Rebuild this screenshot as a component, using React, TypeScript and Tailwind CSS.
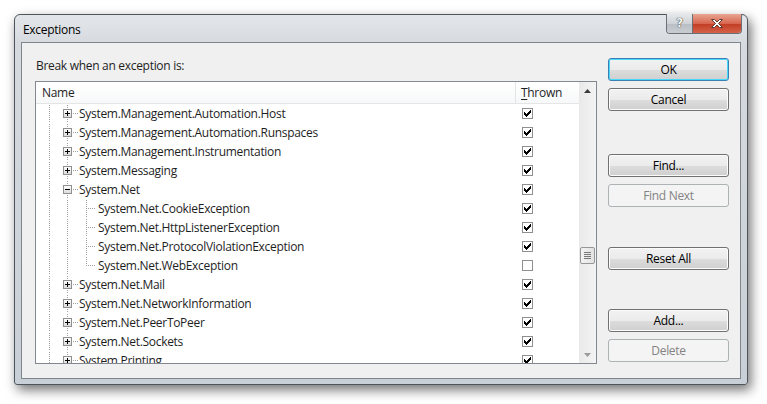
import React from "react";

type Kind = "plus" | "minus" | "child";
type Row = { name: string; kind: Kind; checked: boolean; last?: boolean };

const rows: Row[] = [
  { name: "System.Management.Automation.Host", kind: "plus", checked: true },
  { name: "System.Management.Automation.Runspaces", kind: "plus", checked: true },
  { name: "System.Management.Instrumentation", kind: "plus", checked: true },
  { name: "System.Messaging", kind: "plus", checked: true },
  { name: "System.Net", kind: "minus", checked: true },
  { name: "System.Net.CookieException", kind: "child", checked: true },
  { name: "System.Net.HttpListenerException", kind: "child", checked: true },
  { name: "System.Net.ProtocolViolationException", kind: "child", checked: true },
  { name: "System.Net.WebException", kind: "child", checked: false, last: true },
  { name: "System.Net.Mail", kind: "plus", checked: true },
  { name: "System.Net.NetworkInformation", kind: "plus", checked: true },
  { name: "System.Net.PeerToPeer", kind: "plus", checked: true },
  { name: "System.Net.Sockets", kind: "plus", checked: true },
  { name: "System.Printing", kind: "plus", checked: true },
];

const DOT = "#a0a0a0";

function VDots({ x, y1, y2 }: { x: number; y1: number; y2: number }) {
  const out: React.ReactElement[] = [];
  for (let y = y1; y < y2; y += 2) out.push(<rect key={y} x={x} y={y} width={1} height={1} fill={DOT} />);
  return <>{out}</>;
}
function HDots({ y, x1, x2 }: { y: number; x1: number; x2: number }) {
  const out: React.ReactElement[] = [];
  for (let x = x1; x < x2; x += 2) out.push(<rect key={x} x={x} y={y} width={1} height={1} fill={DOT} />);
  return <>{out}</>;
}

function Gutter({ kind, last }: { kind: Kind; last?: boolean }) {
  const w = kind === "child" ? 62 : 43;
  return (
    <svg width={w} height={19} className="shrink-0" shapeRendering="crispEdges">
      <VDots x={13} y1={1} y2={19} />
      <VDots x={31} y1={1} y2={19} />
      {kind !== "child" && (
        <>
          <defs>
            <linearGradient id="bx" x1="0" y1="0" x2="0" y2="1">
              <stop offset="0" stopColor="#ffffff" />
              <stop offset="1" stopColor="#dadada" />
            </linearGradient>
          </defs>
          <rect x={27} y={5} width={9} height={9} fill="#ffffff" />
          <rect x={27.5} y={5.5} width={8} height={8} fill="url(#bx)" stroke="#8e8f8f" />
          <rect x={29} y={9} width={5} height={1} fill="#000" />
          {kind === "plus" && <rect x={31} y={7} width={1} height={5} fill="#000" />}
          <HDots y={9} x1={37} x2={42} />
        </>
      )}
      {kind === "child" && (
        <>
          <VDots x={50} y1={1} y2={last ? 10 : 19} />
          <HDots y={9} x1={52} x2={60} />
        </>
      )}
    </svg>
  );
}

const CHECK = [
  "......X",
  ".....XX",
  "X...XXX",
  "XX.XXX.",
  "XXXXX..",
  ".XXX...",
  "..X....",
];

function Check({ on }: { on: boolean }) {
  const cells: React.ReactElement[] = [];
  if (on)
    CHECK.forEach((row, y) =>
      row.split("").forEach((c, x) => {
        if (c === "X") cells.push(<rect key={`${x}-${y}`} x={2 + x} y={2 + y} width={1} height={1} fill="#000" />);
      })
    );
  return (
    <svg width={11} height={11} shapeRendering="crispEdges" className="shrink-0">
      <rect x={0.5} y={0.5} width={10} height={10} fill="#fff" stroke="#8f8f8f" />
      {cells}
    </svg>
  );
}

function Btn({ children, def, disabled, className = "" }: { children: React.ReactNode; def?: boolean; disabled?: boolean; className?: string }) {
  if (disabled)
    return (
      <div className={`h-[23px] w-[121px] rounded-[3px] border border-[#adb2b5] bg-[#f4f4f4] flex items-center justify-center text-[#838383] ${className}`}>
        {children}
      </div>
    );
  return (
    <div
      className={`h-[23px] w-[121px] rounded-[3px] border ${def ? "border-[#3c7fb1] shadow-[inset_0_0_0_1px_#48d8fb]" : "border-[#707070] shadow-[inset_0_0_0_1px_#fcfcfc]"} bg-[linear-gradient(#f2f2f2_0%,#ebebeb_50%,#dddddd_51%,#cfcfcf_100%)] flex items-center justify-center text-black ${className}`}
    >
      {children}
    </div>
  );
}

export default function App() {
  return (
    <div className="w-[767px] h-[404px] bg-white pt-[14px] pl-[14px] font-['Open_Sans',sans-serif] text-[12px] leading-[15px] tracking-[-0.3px] text-[#1e1e1e] overflow-hidden">
      <div className="relative w-[734px] h-[371px] rounded-t-[6px] rounded-b-[3px] border border-[#4d545c] bg-[linear-gradient(#e3e6e9,#d6dadf_30px,#c9cfd6)] shadow-[3px_5px_12px_rgba(0,0,0,0.55)] flex flex-col">
        <div className="h-[27px] shrink-0 pl-[8px] pt-[7px] text-[12px] text-black">Exceptions</div>
        {/* caption buttons */}
        <div className="absolute right-[5px] top-[-1px] flex h-[20px] rounded-b-[4px] border border-t-0 border-[#6b7078] overflow-hidden">
          <div className="w-[26px] h-full bg-[linear-gradient(#e6e8ea,#cfd3d7_50%,#b9bec4_51%,#c8cdd2)] flex items-center justify-center border-r border-[#6b7078]">
            <span className="font-['DejaVu_Sans',sans-serif] font-bold text-[12px] text-[#f4f4f4] [text-shadow:0_0_1px_#333,0_0_1px_#333]">?</span>
          </div>
          <div className="w-[48px] h-full bg-[linear-gradient(#e8a693,#d8664f_50%,#c23c22_51%,#d4624a)] flex items-center justify-center">
            <svg width="14" height="11" viewBox="0 0 14 11">
              <path d="M1.5 1.5h3l2.5 2.5 2.5-2.5h3l-4 4 4 4h-3l-2.5-2.5-2.5 2.5h-3l4-4z" fill="#ffffff" stroke="#5a3a34" strokeWidth="1" />
            </svg>
          </div>
        </div>
        <div className="mx-[6px] mb-[5px] ml-[6px] flex-1 border border-[#7e858d] bg-[#f0f0f0] flex items-start pl-[13px] pt-[15px]">
          {/* left column */}
          <div className="w-[562px] flex flex-col">
            <div className="h-[15px] pl-[1px]">Break when an exception is:</div>
            <div className="mt-[8px] h-[283px] border border-[#828790] bg-white flex overflow-hidden">
              <div className="w-[543px] flex flex-col">
                <div className="h-[22px] shrink-0 flex border-b border-[#e5e5e5] bg-[linear-gradient(#ffffff,#f7f8f9)]">
                  <div className="w-[480px] pl-[6px] flex items-center border-r border-[#e5e5e5]">Name</div>
                  <div className="pl-[5px] flex items-center">
                    <span className="underline underline-offset-[2px]">T</span>hrown
                  </div>
                </div>
                <div className="flex flex-col overflow-hidden">
                  {rows.map((r) => (
                    <div key={r.name} className="h-[19px] shrink-0 flex items-center">
                      <div className="w-[480px] flex items-center">
                        <Gutter kind={r.kind} last={r.last} />
                        <span className="whitespace-nowrap">{r.name}</span>
                      </div>
                      <div className="pl-[6px] flex items-center">
                        <Check on={r.checked} />
                      </div>
                    </div>
                  ))}
                </div>
              </div>
              {/* scrollbar */}
              <div className="w-[17px] h-full bg-[linear-gradient(90deg,#e9e9e9,#f4f4f4)] flex flex-col items-center">
                <div className="h-[17px] w-full flex items-center justify-center">
                  <svg width="7" height="4"><path d="M3.5 0L7 4H0z" fill="#3b3b3b" /></svg>
                </div>
                <div className="flex-1 w-full flex flex-col items-center pt-[148px]">
                  <div className="w-[15px] h-[17px] rounded-[2px] border border-[#979797] bg-[linear-gradient(90deg,#f3f3f3,#e2e2e2)] flex flex-col items-center justify-center gap-[1px]">
                    <div className="w-[7px] h-[1px] bg-[#7a7a7a]" />
                    <div className="w-[7px] h-[1px] bg-[#7a7a7a]" />
                    <div className="w-[7px] h-[1px] bg-[#7a7a7a]" />
                    <div className="w-[7px] h-[1px] bg-[#7a7a7a]" />
                  </div>
                </div>
                <div className="h-[17px] w-full flex items-center justify-center">
                  <svg width="7" height="4"><path d="M0 0H7L3.5 4z" fill="#9a9a9a" /></svg>
                </div>
              </div>
            </div>
          </div>
          {/* right column */}
          <div className="ml-[11px] flex flex-col">
            <Btn def>OK</Btn>
            <Btn className="mt-[7px]">Cancel</Btn>
            <Btn className="mt-[43px]">Find...</Btn>
            <Btn disabled className="mt-[7px]">Find Next</Btn>
            <Btn className="mt-[40px]">Reset All</Btn>
            <Btn className="mt-[39px]">Add...</Btn>
            <Btn disabled className="mt-[7px]">Delete</Btn>
          </div>
        </div>
      </div>
    </div>
  );
}
